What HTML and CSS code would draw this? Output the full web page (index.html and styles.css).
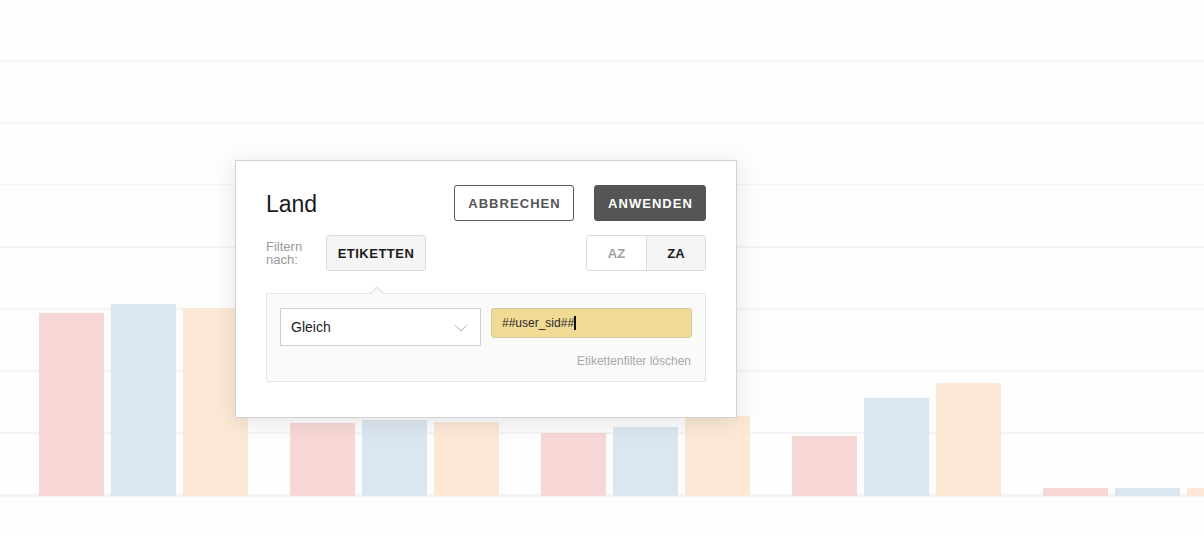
FILE: index.html
```html
<!DOCTYPE html>
<html lang="de">
<head>
<meta charset="utf-8">
<title>Land Filter</title>
<link rel="stylesheet" href="styles.css">
</head>
<body>
<div class="page">
  <div class="chart">
    <div class="group">
      <div class="bar red" style="height:183px"></div>
      <div class="bar blue" style="height:192px"></div>
      <div class="bar orange" style="height:188px"></div>
    </div>
    <div class="group">
      <div class="bar red" style="height:73px"></div>
      <div class="bar blue" style="height:76px"></div>
      <div class="bar orange" style="height:74px"></div>
    </div>
    <div class="group">
      <div class="bar red" style="height:63px"></div>
      <div class="bar blue" style="height:69px"></div>
      <div class="bar orange" style="height:80px"></div>
    </div>
    <div class="group">
      <div class="bar red" style="height:60px"></div>
      <div class="bar blue" style="height:98px"></div>
      <div class="bar orange" style="height:113px"></div>
    </div>
    <div class="group">
      <div class="bar red" style="height:8px"></div>
      <div class="bar blue" style="height:8px"></div>
      <div class="bar orange" style="height:8px"></div>
    </div>
  </div>
  <div class="footer"></div>

  <div class="popup">
    <div class="header">
      <h1 class="title">Land</h1>
      <button class="btn btn-outline">ABBRECHEN</button>
      <button class="btn btn-dark">ANWENDEN</button>
    </div>
    <div class="filter-row">
      <div class="filter-label">Filtern<br>nach:</div>
      <button class="tab">ETIKETTEN</button>
      <div class="sort">
        <button class="sort-btn">AZ</button>
        <button class="sort-btn active">ZA</button>
      </div>
    </div>
    <div class="panel">
      <div class="panel-row">
        <div class="select">
          <span>Gleich</span>
          <svg class="chev" width="14" height="8" viewBox="0 0 14 8"><path d="M1 1 L7 7 L13 1" fill="none" stroke="#b5b5b5" stroke-width="1"/></svg>
        </div>
        <div class="input"><span>##user_sid##</span><span class="cursor"></span></div>
      </div>
      <div class="clear">Etikettenfilter löschen</div>
    </div>
  </div>
</div>
</body>
</html>
```
FILE: styles.css
```css
* { box-sizing: border-box; }
html, body { margin: 0; padding: 0; }
body {
  background: #fdfdfd;
  font-family: "Liberation Sans", Arial, Helvetica, sans-serif;
  color: #222;
  width: 1204px;
  height: 536px;
  overflow: hidden;
}
.page { position: relative; width: 1204px; height: 536px; }

.chart {
  height: 496px;
  display: flex;
  align-items: flex-end;
  gap: 42px;
  padding-left: 39px;
  overflow: hidden;
  background: repeating-linear-gradient(to bottom, transparent 0, transparent 60px, #f4f4f4 60px, #f4f4f4 61.5px, transparent 61.5px, transparent 62px);
}
.group { display: flex; align-items: flex-end; gap: 7px; flex: none; }
.bar { width: 65px; flex: none; }
.red { background: #f6d7d5; }
.blue { background: #dce6f0; }
.orange { background: #fbe8d5; }
.footer { height: 40px; background: #fdfdfd; border-top: 1px solid #f6f6f6; }

.popup {
  position: absolute;
  left: 235px;
  top: 160px;
  width: 502px;
  height: 258px;
  background: #fff;
  border: 1px solid #d2d2d2;
  box-shadow: 0 4px 22px rgba(0, 0, 0, 0.10);
  padding: 24px 30px 0 30px;
}
.header { display: flex; align-items: center; height: 36px; gap: 20px; }
.title {
  flex: 1;
  margin: 0;
  font-size: 23px;
  font-weight: normal;
  color: #1a1a1a;
  line-height: 36px;
  padding-top: 2px;
}
.btn {
  height: 36px;
  font-family: "Liberation Sans", Arial, sans-serif;
  font-size: 13px;
  font-weight: bold;
  letter-spacing: 1.05px;
  border-radius: 3px;
  padding: 0 11px 0 12px;
  cursor: pointer;
}
.btn-outline { width: 120px; background: #fff; color: #555; border: 1px solid #5a5a5a; }
.btn-dark { width: 112px; background: #555; color: #fff; border: 1px solid #555; }

.filter-row { display: flex; align-items: center; margin-top: 14px; height: 36px; }
.filter-label { width: 60px; font-size: 13px; line-height: 13px; color: #9a9a9a; }
.tab {
  height: 36px;
  width: 100px;
  background: #f5f5f5;
  border: 1px solid #dcdcdc;
  border-radius: 3px;
  font-family: "Liberation Sans", Arial, sans-serif;
  font-size: 13px;
  font-weight: bold;
  letter-spacing: 0.5px;
  color: #1a1a1a;
  padding: 0;
}
.sort { margin-left: auto; display: flex; border: 1px solid #dcdcdc; border-radius: 3px; overflow: hidden; }
.sort-btn {
  width: 59px;
  height: 34px;
  border: 0;
  background: #fff;
  font-family: "Liberation Sans", Arial, sans-serif;
  font-size: 13px;
  font-weight: bold;
  color: #a0a0a0;
  padding: 0;
}
.sort-btn.active { background: #f5f5f5; color: #1a1a1a; border-left: 1px solid #dcdcdc; width: 59px; }

.panel {
  position: relative;
  margin-top: 22px;
  background: #fafafa;
  border: 1px solid #e6e6e6;
  padding: 14px 13px 13px 13px;
}
.panel::before, .panel::after {
  content: "";
  position: absolute;
  left: 103px;
  width: 0; height: 0;
  border-left: 7px solid transparent;
  border-right: 7px solid transparent;
}
.panel::before { top: -8px; border-bottom: 7px solid #e6e6e6; }
.panel::after { top: -6px; border-bottom: 6px solid #fafafa; left: 104px; border-left-width: 6px; border-right-width: 6px; }

.panel-row { display: flex; align-items: flex-start; gap: 10px; }
.select {
  width: 201px;
  height: 38px;
  background: #fff;
  border: 1px solid #cfcfcf;
  display: flex;
  align-items: center;
  justify-content: space-between;
  padding: 0 12px 0 10px;
  font-size: 14px;
  color: #222;
}
.chev { margin-top: 1px; }
.input {
  width: 201px;
  height: 30px;
  background: #f0db94;
  border: 1px solid #d2c8a4;
  border-radius: 3px;
  display: flex;
  align-items: center;
  padding: 0 10px;
  font-size: 12px;
  color: #2a2a2a;
}
.cursor { display: inline-block; width: 2px; height: 14px; background: #111; margin-left: 0; }
.clear {
  margin-top: 8px;
  text-align: right;
  font-size: 12px;
  line-height: 14px;
  color: #a8a8a8;
  padding-right: 1px;
}
```
